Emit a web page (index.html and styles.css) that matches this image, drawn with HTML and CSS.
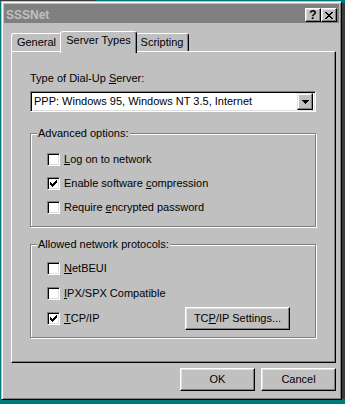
FILE: index.html
```html
<!DOCTYPE html>
<html>
<head>
<meta charset="utf-8">
<title>SSSNet</title>
<link rel="stylesheet" href="styles.css">
</head>
<body>
<div class="win">
  <div class="titlebar">
    <span class="title">SSSNet</span>
    <div class="tbtns">
      <div class="tbtn help">?</div>
      <div class="tbtn close">
        <svg width="8" height="7" viewBox="0 0 8 7" shape-rendering="crispEdges"><path d="M0 0h2v1H0zM6 0h2v1H6zM1 1h2v1H1zM5 1h2v1H5zM2 2h4v1H2zM3 3h2v1H3zM2 4h4v1H2zM1 5h2v1H1zM5 5h2v1H5zM0 6h2v1H0zM6 6h2v1H6z" fill="#000"/></svg>
      </div>
    </div>
  </div>
  <div class="tabs">
    <div class="tab t-general">General</div>
    <div class="tab active t-server">Server Types</div>
    <div class="tab t-script">Scripting</div>
  </div>
  <div class="panel">
    <div class="label">Type of Dial-Up <u>S</u>erver:</div>
    <div class="combo">
      <span class="combo-text">PPP: Windows 95, Windows NT 3.5, Internet</span>
      <div class="drop"><svg width="7" height="4" viewBox="0 0 7 4" shape-rendering="crispEdges"><path d="M0 0h7v1H0zM1 1h5v1H1zM2 2h3v1H2zM3 3h1v1H3z" fill="#000"/></svg></div>
    </div>
    <fieldset class="group adv">
      <legend>Advanced options:</legend>
      <div class="row"><span class="cb"></span><span class="cbl"><u>L</u>og on to network</span></div>
      <div class="row"><span class="cb"><svg width="7" height="7" viewBox="0 0 7 7" shape-rendering="crispEdges"><path d="M0 2h1v3H0zM1 3h1v3H1zM2 4h1v3H2zM3 3h1v3H3zM4 2h1v3H4zM5 1h1v3H5zM6 0h1v3H6z" fill="#000"/></svg></span><span class="cbl">Enable software <u>c</u>ompression</span></div>
      <div class="row"><span class="cb"></span><span class="cbl">Require <u>e</u>ncrypted password</span></div>
    </fieldset>
    <fieldset class="group proto">
      <legend>Allowed network protocols:</legend>
      <div class="row"><span class="cb"></span><span class="cbl"><u>N</u>etBEUI</span></div>
      <div class="row"><span class="cb"></span><span class="cbl"><u>I</u>PX/SPX Compatible</span></div>
      <div class="row"><span class="cb"><svg width="7" height="7" viewBox="0 0 7 7" shape-rendering="crispEdges"><path d="M0 2h1v3H0zM1 3h1v3H1zM2 4h1v3H2zM3 3h1v3H3zM4 2h1v3H4zM5 1h1v3H5zM6 0h1v3H6z" fill="#000"/></svg></span><span class="cbl grow"><u>T</u>CP/IP</span><div class="btn settings">TC<u>P</u>/IP Settings...</div></div>
    </fieldset>
  </div>
  <div class="footer">
    <div class="btn">OK</div>
    <div class="btn">Cancel</div>
  </div>
</div>
</body>
</html>
```
FILE: styles.css
```css
* { box-sizing: border-box; }
html, body { margin: 0; padding: 0; }
body {
  width: 345px;
  height: 404px;
  overflow: hidden;
  background:
    linear-gradient(#3c3c3c, #3c3c3c) no-repeat 0 0 / 96px 1px,
    linear-gradient(#3a3a3a, #3a3a3a) no-repeat right 0 top 3px / 3px 396px,
    #007b7b;
  font-family: "Liberation Sans", Arial, sans-serif;
  font-size: 11px;
  color: #000;
}
.win {
  margin: 1px 0 0 1px;
  width: 341px;
  height: 399px;
  background: #c0c0c0;
  border: 1px solid;
  border-color: #c0c0c0 #000 #000 #c0c0c0;
  box-shadow: inset 1px 1px #fff, inset -1px -1px #808080;
  padding: 2px;
  display: flex;
  flex-direction: column;
}
.titlebar {
  height: 19px;
  background: #808080;
  display: flex;
  align-items: flex-end;
  justify-content: space-between;
  padding: 0 2px 1px 2px;
}
.title {
  color: #c0c0c0;
  font-weight: bold;
  font-size: 12px;
  line-height: 14px;
}
.tbtns { display: flex; }
.tbtn {
  width: 16px;
  height: 14px;
  background: #c0c0c0;
  border: 1px solid;
  border-color: #fff #000 #000 #fff;
  box-shadow: inset -1px -1px #808080, inset 1px 1px #dfdfdf;
  display: flex;
  align-items: center;
  justify-content: center;
  font-weight: bold;
  font-size: 12px;
  line-height: 11px;
}
.tabs {
  margin-top: 8px;
  height: 20px;
  padding-left: 7px;
  display: flex;
  align-items: flex-end;
}
.tab {
  height: 18px;
  background: #c0c0c0;
  border: 1px solid;
  border-bottom: none;
  border-color: #fff #000 transparent #fff;
  border-radius: 3px 3px 0 0;
  box-shadow: inset -1px 0 #808080;
  padding-top: 2px;
  text-align: center;
  line-height: 13px;
}
.t-general { width: 51px; }
.t-server { width: 77px; }
.t-script { width: 54px; }
.tab.active {
  height: 22px;
  margin: 0 -2px -2px;
  position: relative;
  z-index: 1;
}
.panel {
  width: 325px;
  height: 312px;
  margin-left: 7px;
  background: #c0c0c0;
  border: 1px solid;
  border-color: #fff #000 #000 #fff;
  box-shadow: inset -1px -1px #808080;
  padding: 20px 19px 0 18px;
}
.label { line-height: 13px; height: 13px; }
.combo {
  width: 286px;
  height: 21px;
  margin-top: 6px;
  background: #fff;
  border: 1px solid;
  border-color: #808080 #fff #fff #808080;
  box-shadow: inset 1px 1px #000, inset -1px -1px #dfdfdf;
  padding: 2px 2px 2px 3px;
  display: flex;
  align-items: center;
}
.combo-text { flex: 1; line-height: 13px; white-space: nowrap; }
.drop {
  width: 16px;
  height: 17px;
  background: #c0c0c0;
  border: 1px solid;
  border-color: #dfdfdf #000 #000 #dfdfdf;
  box-shadow: inset -1px -1px #808080, inset 1px 1px #fff;
  display: flex;
  align-items: center;
  justify-content: center;
}
.group {
  margin: 0;
  min-width: 0;
  border: 1px solid #808080;
  box-shadow: 1px 1px 0 #fff, inset 1px 1px 0 #fff;
}
.group legend {
  padding: 0 1px;
  margin-left: -10px;
  line-height: 13px;
  background: #c0c0c0;
}
.adv { margin-top: 15px; padding: 7px 0 7px 16px; }
.proto { margin-top: 11px; padding: 5px 25px 6px 16px; }
.row {
  display: flex;
  align-items: center;
  gap: 4px;
  height: 24px;
}
.proto .row { height: 25px; }
.cb {
  width: 13px;
  height: 13px;
  flex: none;
  background: #fff;
  border: 1px solid;
  border-color: #808080 #fff #fff #808080;
  box-shadow: inset 1px 1px #000, inset -1px -1px #dfdfdf;
  display: flex;
  align-items: center;
  justify-content: center;
}
.cbl { line-height: 13px; white-space: nowrap; }
.grow { flex: 1; }
.btn {
  height: 23px;
  width: 75px;
  background: #c0c0c0;
  border: 1px solid;
  border-color: #fff #000 #000 #fff;
  box-shadow: inset -1px -1px #808080, inset 1px 1px #dfdfdf;
  display: flex;
  align-items: center;
  justify-content: center;
  line-height: 13px;
  white-space: nowrap;
}
.settings { width: 105px; }
.footer {
  margin-top: 5px;
  padding-right: 3px;
  display: flex;
  justify-content: flex-end;
  gap: 6px;
}
```
